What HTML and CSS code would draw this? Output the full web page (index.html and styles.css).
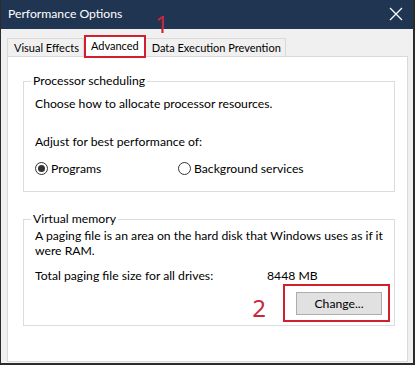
FILE: index.html
```html
<!DOCTYPE html>
<html>
<head>
<meta charset="utf-8">
<link rel="stylesheet" href="styles.css">
</head>
<body>
<div class="window">
  <div class="titlebar">
    <span class="title">Performance Options</span>
    <svg class="close" width="14" height="14" viewBox="0 0 14 14"><path d="M1 1 L13 13 M13 1 L1 13" stroke="#fff" stroke-width="1.3" fill="none"/></svg>
  </div>
  <div class="body">
    <div class="tabs">
      <div class="tab">Visual Effects</div>
      <div class="tab active">Advanced
        <span class="mark mark-box1"></span>
        <span class="num num1">1</span>
      </div>
      <div class="tab">Data Execution Prevention</div>
    </div>
    <div class="panel">
      <fieldset class="group group-proc">
        <legend>Processor scheduling</legend>
        <p class="line">Choose how to allocate processor resources.</p>
        <p class="line adjust">Adjust for best performance of:</p>
        <div class="radios">
          <label class="radio"><span class="dot checked"></span>Programs</label>
          <label class="radio bg"><span class="dot"></span>Background services</label>
        </div>
      </fieldset>
      <fieldset class="group group-vm">
        <legend>Virtual memory</legend>
        <p class="line para">A paging file is an area on the hard disk that Windows uses as if it were RAM.</p>
        <div class="total"><span class="total-label">Total paging file size for all drives:</span><span>8448 MB</span></div>
        <div class="btnrow">
          <span class="num num2">2</span>
          <div class="btnwrap">
            <button class="btn">Change...</button>
          </div>
        </div>
      </fieldset>
    </div>
  </div>
</div>
</body>
</html>
```
FILE: styles.css
```css
* { box-sizing: border-box; }
html, body { margin: 0; padding: 0; }
body {
  width: 415px;
  height: 365px;
  overflow: hidden;
  font-family: "Lato", "Noto Sans", sans-serif;
  font-size: 12.2px;
  color: #000;
  background: #f0f0f0;
}
.window {
  width: 415px;
  height: 365px;
  display: flex;
  flex-direction: column;
  border-left: 1px solid #2b2b2b;
  border-right: 2px solid #2b2b2b;
  border-bottom: 2px solid #2b2b2b;
  background: #f0f0f0;
}
.titlebar {
  height: 29px;
  flex: none;
  background: #1f3552;
  color: #fff;
  display: flex;
  align-items: center;
  justify-content: space-between;
  padding: 0 10px 0 7px;
  font-size: 12.2px;
}
.title { position: relative; top: -1px; }
.close { position: relative; top: -1px; }
.body {
  flex: 1;
  display: flex;
  flex-direction: column;
  padding: 9px 5px 0 6px;
}
.tabs {
  display: flex;
  align-items: flex-end;
  height: 18px;
  padding-left: 0;
  position: relative;
  z-index: 2;
  font-size: 11px;
}
.tab {
  height: 18px;
  border: 1px solid #d9d9d9;
  border-bottom: none;
  background: #f0f0f0;
  padding: 0 4px 0 6px;
  line-height: 18px;
  white-space: nowrap;
  position: relative;
}
.tab + .tab { border-left: none; }
.tab.active {
  height: 21px;
  background: #fff;
  border-left: 1px solid #d9d9d9;
  margin-bottom: -1px;
  line-height: 18px;
  padding: 0 6px 0 6px;
}
.tab.active + .tab { border-left: none; }
.mark {
  position: absolute;
  border: 2px solid #d0202e;
}
.mark-box1 { left: -1px; right: -1px; top: -2px; bottom: -1px; }
.num {
  position: absolute;
  color: #c8293a;
  font-size: 24px;
  line-height: 1;
  font-family: "Noto Sans", sans-serif;
}
.num1 { left: 70px; top: -25px; }
.panel {
  flex: 1;
  background: #fff;
  border: 1px solid #d9d9d9;
  margin-bottom: 1px;
  padding: 16px 12px 0 15px;
  position: relative;
  z-index: 1;
}
.group {
  margin: 0;
  border: 1px solid #dcdcdc;
  padding: 0 0 0 11px;
  min-width: 0;
}
.group legend {
  padding: 0 2px;
  margin-left: -4px;
  line-height: 16px;
}
.line { margin: 0; line-height: 17px; }
.group-proc { height: 119px; padding-top: 6px; }
.adjust { margin-top: 21px; }
.radios {
  display: flex;
  margin-top: 10px;
}
.radio {
  display: flex;
  align-items: center;
  gap: 3px;
  width: 143px;
  line-height: 17px;
}
.dot {
  width: 13px;
  height: 13px;
  border: 1px solid #333;
  border-radius: 50%;
  display: inline-flex;
  align-items: center;
  justify-content: center;
}
.dot.checked::after {
  content: "";
  width: 7px;
  height: 7px;
  border-radius: 50%;
  background: #333;
}
.group-vm { margin-top: 19px; height: 115px; padding-top: 1px; padding-right: 0; }
.para { line-height: 15px; }
.total { display: flex; margin-top: 9px; line-height: 17px; }
.total-label { width: 232px; }
.btnrow {
  display: flex;
  justify-content: flex-end;
  align-items: flex-start;
  padding-right: 4px;
  margin-top: 0;
  gap: 17px;
}
.num2 { position: static; margin-top: 12px; }
.btnwrap {
  border: 2px solid #d0202e;
  padding: 6px 6px 5px 11px;
}
.btn {
  display: block;
  width: 86px;
  height: 23px;
  background: #e1e1e1;
  border: 1px solid #adadad;
  font-family: inherit;
  font-size: 12.2px;
  color: #000;
  padding: 0;
}
```
